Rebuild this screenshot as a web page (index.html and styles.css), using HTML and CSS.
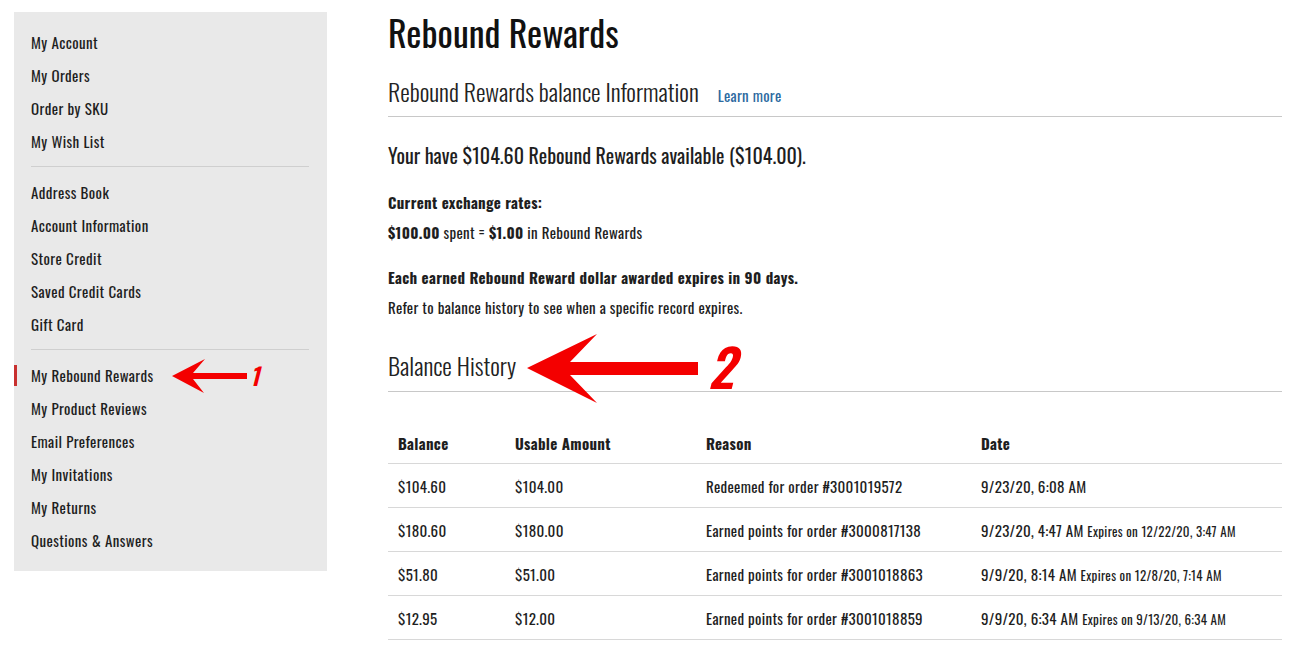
FILE: index.html
```html
<!DOCTYPE html>
<html lang="en">
<head>
  <meta charset="UTF-8" />
  <title>Rebound Rewards</title>
  <link rel="stylesheet" href="styles.css">
</head>
<body>
<aside class="sidebar">
  <ul class="nav-group">
    <li><a href="#">My Account</a></li>
    <li><a href="#">My Orders</a></li>
    <li><a href="#">Order by SKU</a></li>
    <li><a href="#">My Wish List</a></li>
  </ul>
  <ul class="nav-group">
    <li><a href="#">Address Book</a></li>
    <li><a href="#">Account Information</a></li>
    <li><a href="#">Store Credit</a></li>
    <li><a href="#">Saved Credit Cards</a></li>
    <li><a href="#">Gift Card</a></li>
  </ul>
  <ul class="nav-group">
    <li class="active"><a href="#">My Rebound Rewards</a></li>
    <li><a href="#">My Product Reviews</a></li>
    <li><a href="#">Email Preferences</a></li>
    <li><a href="#">My Invitations</a></li>
    <li><a href="#">My Returns</a></li>
    <li><a href="#">Questions &amp; Answers</a></li>
  </ul>
</aside>

<main class="content">
  <h1 class="page-title">Rebound Rewards</h1>

  <div class="block-title">
    <h2>Rebound Rewards balance Information</h2>
    <a href="#" class="learn-more">Learn more</a>
  </div>

  <p class="balance">Your have $104.60 Rebound Rewards available ($104.00).</p>

  <p class="info-title">Current exchange rates:</p>
  <p class="info-text"><strong>$100.00</strong> spent = <strong>$1.00</strong> in Rebound Rewards</p>

  <p class="info-title">Each earned Rebound Reward dollar awarded expires in 90 days.</p>
  <p class="info-text">Refer to balance history to see when a specific record expires.</p>

  <div class="block-title history-title">
    <h2>Balance History</h2>
  </div>

  <table class="history">
    <thead>
      <tr>
        <th class="col-balance">Balance</th>
        <th class="col-usable">Usable Amount</th>
        <th class="col-reason">Reason</th>
        <th>Date</th>
      </tr>
    </thead>
    <tbody>
      <tr>
        <td>$104.60</td>
        <td>$104.00</td>
        <td>Redeemed for order #3001019572</td>
        <td>9/23/20, 6:08 AM</td>
      </tr>
      <tr>
        <td>$180.60</td>
        <td>$180.00</td>
        <td>Earned points for order #3000817138</td>
        <td>9/23/20, 4:47 AM <span class="expires">Expires on 12/22/20, 3:47 AM</span></td>
      </tr>
      <tr>
        <td>$51.80</td>
        <td>$51.00</td>
        <td>Earned points for order #3001018863</td>
        <td>9/9/20, 8:14 AM <span class="expires">Expires on 12/8/20, 7:14 AM</span></td>
      </tr>
      <tr>
        <td>$12.95</td>
        <td>$12.00</td>
        <td>Earned points for order #3001018859</td>
        <td>9/9/20, 6:34 AM <span class="expires">Expires on 9/13/20, 6:34 AM</span></td>
      </tr>
    </tbody>
  </table>
</main>

<!-- annotation arrows drawn over the screenshot -->
<svg class="annotations" width="1300" height="670" viewBox="0 0 1300 670">
  <polygon points="172,376 205,359 193,373 247,373 247,379 193,379 204,393" />
  <text x="250" y="386" class="num-small">1</text>
  <polygon points="527,368 597,334 570,362 698,362 698,375 570,375 597,403" />
  <text x="708" y="389" class="num-big">2</text>
</svg>
</body>
</html>
```

FILE: styles.css
```css
body {
  font-family: Oswald, "Roboto Condensed", "Liberation Sans", sans-serif;
  font-weight: 300;
  color: #1e1e1e;
  background: #fff;
  margin: 0;
  padding: 12px 14px;
  display: flex;
  align-items: flex-start;
  position: relative;
}
a {
  color: inherit;
  text-decoration: none;
}
strong {
  font-weight: 700;
}

/* sidebar */
.sidebar {
  width: 313px;
  flex-shrink: 0;
  background: #e9e9e9;
  padding: 14px 0 14px;
}
.nav-group {
  list-style: none;
  margin: 0 18px 0 0;
  padding: 0;
}
.nav-group + .nav-group {
  margin-top: 8px;
  padding-top: 9px;
  border-top: 1px solid #cfcfcf;
  margin-left: 17px;
}
.nav-group + .nav-group li {
  margin-left: -17px;
}
.nav-group li {
  position: relative;
  height: 33px;
  line-height: 33px;
  padding-left: 17px;
  font-size: 15px;
  font-weight: 400;
  letter-spacing: 0.4px;
}
.nav-group li.active::before {
  content: "";
  position: absolute;
  left: 0;
  top: 6px;
  width: 3px;
  height: 21px;
  background: #c8302f;
}

/* main column */
.content {
  margin-left: 61px;
  width: 894px;
}
.page-title {
  font-size: 36px;
  font-weight: 400;
  line-height: 40px;
  margin: 0;
  color: #111;
}
.block-title {
  display: flex;
  align-items: baseline;
  gap: 19px;
  margin-top: 24px;
  padding-bottom: 10px;
  border-bottom: 1px solid #c8c8c8;
}
.block-title h2 {
  font-size: 24px;
  font-weight: 300;
  line-height: 30px;
  margin: 0;
  color: #222;
}
.learn-more {
  color: #2d6a9f;
  font-size: 15px;
  font-weight: 400;
  letter-spacing: 0.3px;
}
.balance {
  font-size: 20px;
  font-weight: 400;
  margin: 25px 0 19px;
  line-height: 26px;
}
.info-title {
  font-size: 15px;
  font-weight: 700;
  margin: 0;
  line-height: 30px;
  letter-spacing: 0.3px;
}
.info-text {
  font-size: 15px;
  font-weight: 400;
  margin: 0 0 15px;
  line-height: 30px;
  letter-spacing: 0.3px;
}
.history-title {
  margin-top: 28px;
  padding-bottom: 11px;
}

/* balance history table */
.history {
  width: 100%;
  border-collapse: collapse;
  margin-top: 31px;
  font-size: 15px;
  font-weight: 400;
  letter-spacing: 0.3px;
}
.history th {
  text-align: left;
  font-weight: 700;
  height: 40px;
  padding: 0 10px;
  border-bottom: 1px solid #d8d8d8;
}
.history td {
  padding: 0 10px;
  height: 43px;
  border-bottom: 1px solid #d8d8d8;
}
.col-balance {
  width: 97px;
}
.col-usable {
  width: 171px;
}
.col-reason {
  width: 255px;
}
.expires {
  font-size: 13px;
}

/* overlay */
.annotations {
  position: absolute;
  top: 0;
  left: 0;
  pointer-events: none;
}
.annotations polygon {
  fill: #f40000;
}
.annotations text {
  fill: #f40000;
  font-family: Oswald, "Liberation Sans", sans-serif;
  font-style: italic;
  font-weight: 600;
}
.num-small {
  font-size: 24px;
}
.num-big {
  font-size: 52px;
}
```
